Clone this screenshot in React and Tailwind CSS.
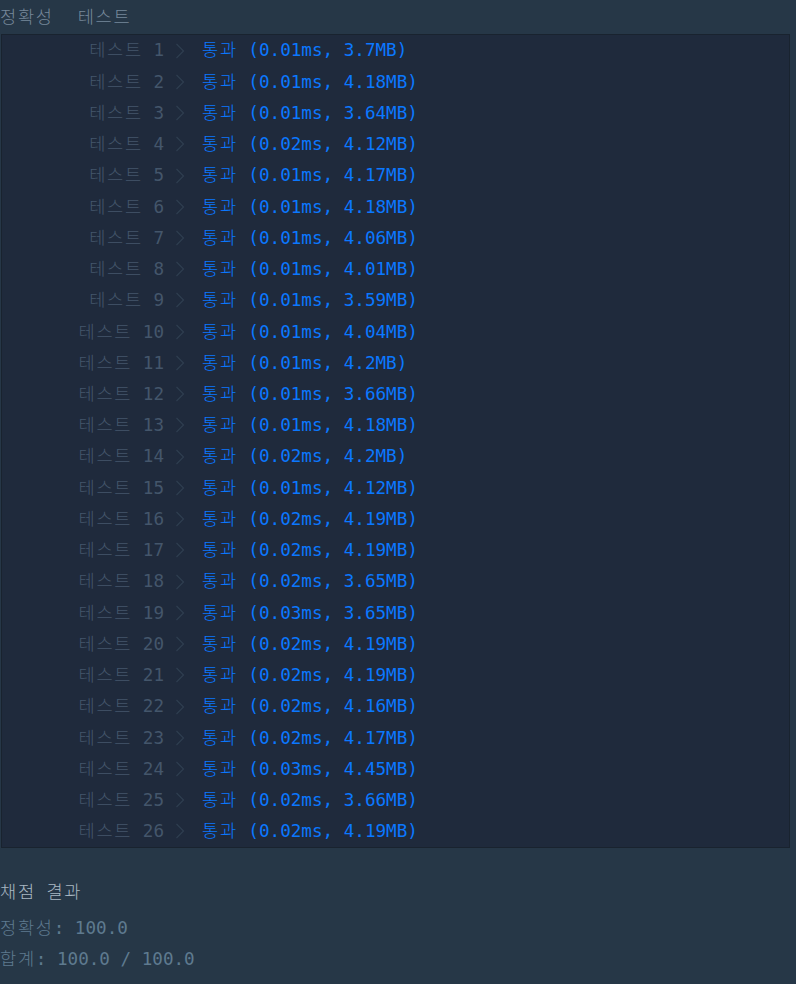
import React from 'react';

const rows = [
  ['0.01ms', '3.7MB'],
  ['0.01ms', '4.18MB'],
  ['0.01ms', '3.64MB'],
  ['0.02ms', '4.12MB'],
  ['0.01ms', '4.17MB'],
  ['0.01ms', '4.18MB'],
  ['0.01ms', '4.06MB'],
  ['0.01ms', '4.01MB'],
  ['0.01ms', '3.59MB'],
  ['0.01ms', '4.04MB'],
  ['0.01ms', '4.2MB'],
  ['0.01ms', '3.66MB'],
  ['0.01ms', '4.18MB'],
  ['0.02ms', '4.2MB'],
  ['0.01ms', '4.12MB'],
  ['0.02ms', '4.19MB'],
  ['0.02ms', '4.19MB'],
  ['0.02ms', '3.65MB'],
  ['0.03ms', '3.65MB'],
  ['0.02ms', '4.19MB'],
  ['0.02ms', '4.19MB'],
  ['0.02ms', '4.16MB'],
  ['0.02ms', '4.17MB'],
  ['0.03ms', '4.45MB'],
  ['0.02ms', '3.66MB'],
  ['0.02ms', '4.19MB'],
];

const mono = "font-['DejaVu_Sans_Mono','Noto_Sans_CJK_KR',monospace]";

// hangul is wider in the original coding font
const K = ({ children }) => <span className="tracking-[1.7px] font-light">{children}</span>;

// chevron between test name and result
const Chevron = () => (
  <svg width="10" height="16" viewBox="0 0 10 16" className="shrink-0">
    <path d="M1.5 1 L8.5 8 L1.5 15" fill="none" stroke="#2f3e50" strokeWidth="1.2" />
  </svg>
);

export default function App() {
  return (
    <div className={`min-h-[984px] w-[796px] bg-[#263747] ${mono} text-[17.6px]`}>
      {/* Header */}
      <div className="flex h-[34px] items-center gap-[24px] text-[#76889a]">
        <K>정확성</K>
        <K>테스트</K>
      </div>

      {/* Results table */}
      <div className="ml-px w-[789px] border border-[#19232f] bg-[#1f2a3c]">
        {rows.map(([t, m], i) => (
          <div key={i} className="flex h-[31.24px] items-center whitespace-pre">
            <span className="w-[162px] text-right text-[#44566b]">
              <K>테스트</K>{` ${i + 1}`}
            </span>
            <span className="ml-[11px] flex items-center">
              <Chevron />
            </span>
            <span className="ml-[17px] text-[#0b78ff]">
              <K>통과</K>{` (${t}, ${m})`}
            </span>
          </div>
        ))}
      </div>

      {/* Summary */}
      <div className="pt-[26px] whitespace-pre">
        <div className="h-[39px] leading-[37px] text-[#a9b7c3]">
          <K>채점</K> <K>결과</K>
        </div>
        <div className="h-[31px] leading-[31px] text-[#5e7a8f]">
          <K>정확성</K>: 100.0
        </div>
        <div className="h-[31px] leading-[31px] text-[#5e7a8f]">
          <K>합계</K>: 100.0 / 100.0
        </div>
      </div>
    </div>
  );
}
